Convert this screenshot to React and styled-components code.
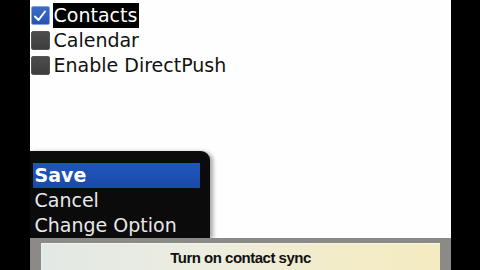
import React from 'react'
import styled, { createGlobalStyle } from 'styled-components'

const GlobalStyle = createGlobalStyle`
    html, body {
        margin: 0;
        padding: 0;
        background: #000;
        width: 480px;
        height: 270px;
        overflow: hidden;
    }
`

const options = [
    { label: 'Email', checked: false },
    { label: 'Contacts', checked: true, selected: true },
    { label: 'Calendar', checked: false },
    { label: 'Enable DirectPush', checked: false },
]

const menuItems = ['Save', 'Cancel', 'Change Option']

const CheckMark = () => (
    <svg width="16" height="16" viewBox="0 0 16 16">
        <path d="M3 8.5 L6.5 12 L13 3.5" fill="none" stroke="#fff" strokeWidth="2" strokeLinecap="round" strokeLinejoin="round" />
    </svg>
)

const App = () => {
    return (
        <Device>
            <GlobalStyle />
            <Bezel />
            <Screen>
                <OptionList>
                    {options.map((o) => (
                        <OptionRow key={o.label}>
                            <Box checked={o.checked}>{o.checked && <CheckMark />}</Box>
                            <Label selected={o.selected}>{o.label}</Label>
                        </OptionRow>
                    ))}
                </OptionList>
                <Menu>
                    {menuItems.map((m, i) => (
                        <MenuItem key={m} active={i === 0}>{m}</MenuItem>
                    ))}
                </Menu>
                <Toast>
                    <ToastInner>Turn on contact sync</ToastInner>
                </Toast>
            </Screen>
            <Bezel />
        </Device>
    )
}

export default App

const Device = styled.div`
    display: flex;
    width: 480px;
    height: 270px;
    background: #000;
`

const Bezel = styled.div`
    flex: 1;
    background: #000;
`

const Screen = styled.div`
    position: relative;
    width: 421px;
    flex: none;
    height: 270px;
    background: #fefefe;
    overflow: hidden;
`

const OptionList = styled.div`
    display: flex;
    flex-direction: column;
    margin-top: -22px;
    padding-left: 1px;
`

const OptionRow = styled.div`
    display: flex;
    align-items: center;
    height: 25px;
`

const Box = styled.div`
    width: 19px;
    height: 19px;
    margin-right: 3px;
    border-radius: 2px;
    display: flex;
    align-items: center;
    justify-content: center;
    box-sizing: border-box;
    background: ${(p) => (p.checked ? 'linear-gradient(#3d6cc8, #2552b0)' : 'linear-gradient(#4c4c4c, #3e3e3e)')};
    border: 1px solid ${(p) => (p.checked ? '#7fa3e6' : '#555')};
`

const Label = styled.span`
    font-family: "DejaVu Sans", sans-serif;
    font-size: 19px;
    line-height: 25px;
    padding: 0 2px 0 1px;
    color: ${(p) => (p.selected ? '#fff' : '#111')};
    background: ${(p) => (p.selected ? '#000' : 'transparent')};
`

const Menu = styled.div`
    position: absolute;
    left: 0;
    top: 151px;
    width: 180px;
    height: 87px;
    box-sizing: border-box;
    padding: 12px 10px 0 3px;
    background: #0b0b0b;
    border-top-right-radius: 9px;
    box-shadow: 3px 1px 4px rgba(0, 0, 0, 0.35);
`

const MenuItem = styled.div`
    height: 25px;
    line-height: 25px;
    padding-left: 2px;
    font-family: "DejaVu Sans", sans-serif;
    font-size: 19px;
    font-weight: ${(p) => (p.active ? 'bold' : 'normal')};
    color: ${(p) => (p.active ? '#fff' : '#e8e8e8')};
    background: ${(p) => (p.active ? 'linear-gradient(#1f56bd, #1a4aa8)' : 'transparent')};
`

const Toast = styled.div`
    position: absolute;
    left: 0;
    right: 0;
    top: 238px;
    bottom: 0;
    padding: 5px 11px 0 11px;
    background: #8b8a87;
`

const ToastInner = styled.div`
    height: 100%;
    box-sizing: border-box;
    padding-top: 5px;
    border-top: 1px solid #f4f4ee;
    border-left: 1px solid #f0f0ea;
    background: linear-gradient(to right, #e2e8e5 0%, #ecede0 40%, #f2ecc8 75%, #f4ebc0 100%);
    text-align: center;
    font-family: "Liberation Sans", Arial, sans-serif;
    font-weight: bold;
    font-size: 15px;
    letter-spacing: -0.5px;
    line-height: 18px;
    color: #111;
`
